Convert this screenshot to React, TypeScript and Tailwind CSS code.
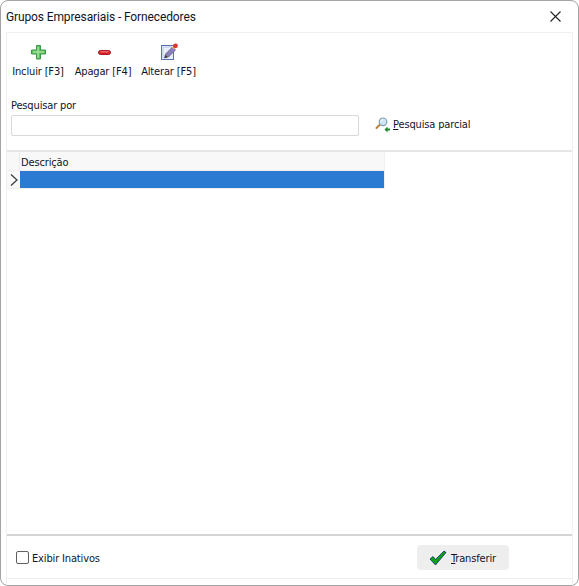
const font = "font-['DejaVu_Sans_Condensed','DejaVu_Sans',sans-serif]";

function PlusIcon() {
  return (
    <svg width="16" height="16" viewBox="0 0 16 16">
      <path d="M5.5 1.5h4v4.5h5v4h-5v5h-4v-5h-5v-4h5z" fill="#5fbf5f" stroke="#3f9a45" />
      <path d="M7 3v11M2 8h11" stroke="#a3e09f" strokeWidth="1.5" />
    </svg>
  );
}

function MinusIcon() {
  return (
    <svg width="13" height="5" viewBox="0 0 13 5">
      <rect x="0.5" y="0.5" width="12" height="4" rx="2" fill="#d9212a" stroke="#a81a20" />
      <path d="M2.5 1.8h8" stroke="#f58a86" strokeWidth="1" />
    </svg>
  );
}

function EditIcon() {
  return (
    <svg width="18" height="18" viewBox="0 0 18 18">
      <rect x="0.5" y="2.5" width="12" height="14" fill="#eaf0fb" stroke="#5a70b5" />
      <path d="M2 15V4h9" stroke="#b9c8e8" fill="none" />
      <path d="M3.5 15l1-4 7-7 3 3-7 7z" fill="#8a7fb8" stroke="#5b5a8c" strokeWidth="0.7" />
      <path d="M3.5 15l1-3 2 2z" fill="#3a3a3a" />
      <path d="M11.5 4l2 2" stroke="#e5b53a" strokeWidth="1.6" />
      <circle cx="14.5" cy="2.8" r="2.4" fill="#e0322c" />
    </svg>
  );
}

function SearchIcon() {
  return (
    <svg width="16" height="16" viewBox="0 0 16 16">
      <path d="M1.5 11l4-4" stroke="#b8823e" strokeWidth="2" strokeLinecap="round" />
      <circle cx="8" cy="4.8" r="3.8" fill="#cfe6f7" stroke="#7f9fb8" strokeWidth="1.2" />
      <path d="M6 4.5a2 2 0 0 1 2-2" stroke="#ffffff" fill="none" />
      <path d="M9.5 12.5l3-3v2H15v2h-2.500v2z" fill="#1c8a2a" />
    </svg>
  );
}

function CheckIcon() {
  return (
    <svg width="18" height="16" viewBox="0 0 18 16">
      <path d="M1 9l3-2.500 2.500 3L15 1l2 1.500L6.500 15z" fill="#0fa01a" stroke="#0a2a6a" strokeWidth="0.8" strokeLinejoin="round" />
    </svg>
  );
}

function ToolButton({ icon, label, width }: { icon: React.ReactNode; label: string; width: string }) {
  return (
    <button type="button" className={`flex flex-col items-center ${width}`}>
      <span className="flex h-[18px] translate-x-[1px] items-center justify-center">{icon}</span>
      <span className="mt-[3px] whitespace-nowrap leading-[16px]">{label}</span>
    </button>
  );
}

export default function App() {
  return (
    <div className={`${font} flex h-[586px] w-[579px] flex-col rounded-lg border border-[#a3a3a3] bg-white text-[11px] tracking-[-0.15px] text-[#10142a]`}>
      <header className="flex h-[31px] shrink-0 items-center justify-between pr-[17px] pl-[5px]">
        <span className="font-['Roboto',sans-serif] text-[12px] tracking-[-0.12px] leading-none">Grupos Empresariais - Fornecedores</span>
        <svg width="11" height="11" viewBox="0 0 11 11">
          <path d="M0.5 0.5l10 10M10.5 0.5l-10 10" stroke="#222" strokeWidth="1.1" />
        </svg>
      </header>

      <main className="mx-[5px] flex min-h-0 flex-1 flex-col border-x border-t border-[#f0f0f0]">
        <section className="h-[119px] shrink-0 border-b-2 border-[#e6e6e6] pl-[4px]">
          <div className="flex items-start pt-[10px]">
            <ToolButton icon={<PlusIcon />} label="Incluir [F3]" width="w-[54px]" />
            <ToolButton icon={<MinusIcon />} label="Apagar [F4]" width="w-[74px] ml-[1px]" />
            <ToolButton icon={<EditIcon />} label="Alterar [F5]" width="w-[57px]" />
          </div>
          <label className="mt-[18px] block leading-[16px]">Pesquisar por</label>
          <div className="mt-[1px] flex items-center">
            <input className="h-[21px] w-[348px] rounded-[2px] border border-[#d9d9d9] bg-white" />
            <button type="button" className="ml-[16px] flex -translate-y-[1px] items-center gap-[2px]">
              <SearchIcon />
              <span className="leading-none"><span className="underline">P</span>esquisa parcial</span>
            </button>
          </div>
        </section>

        <section className="min-h-0 flex-1 border-b-2 border-[#d4d4d4]">
          <div className="w-[378px] border-r border-[#efefef]">
            <div className="flex h-[19px] border-b border-[#efefef] bg-[#f8f8f8]">
              <div className="w-[13px] border-r border-[#ececec]" />
              <div className="pl-[1px] leading-[21px]">Descrição</div>
            </div>
            <div className="flex h-[18px] border-b border-[#efefef]">
              <div className="flex w-[13px] items-center justify-center bg-[#f8f8f8]">
                <svg width="8" height="12" viewBox="0 0 8 12">
                  <path d="M1 0.500l6 5.500-6 5.500" stroke="#3f3f3f" strokeWidth="1.3" fill="none" />
                </svg>
              </div>
              <div className="flex-1 bg-[#2b7bd3]" />
            </div>
          </div>
        </section>

        <footer className="mb-[6px] flex h-[43px] shrink-0 items-center justify-between border-b border-[#f0f0f0] pt-[1px] pr-[63px] pl-[9px]">
          <label className="flex items-center gap-[3px]">
            <span className="h-[13px] w-[13px] rounded-[2px] border border-[#5f5f5f] bg-white" />
            <span className="translate-y-[2px]">Exibir Inativos</span>
          </label>
          <button type="button" className="flex h-[25px] w-[92px] items-center gap-[4px] rounded-[4px] bg-[#eeeeee] pl-[12px]">
            <CheckIcon />
            <span className="translate-y-[2px]"><span className="underline">T</span>ransferir</span>
          </button>
        </footer>
      </main>
    </div>
  );
}
